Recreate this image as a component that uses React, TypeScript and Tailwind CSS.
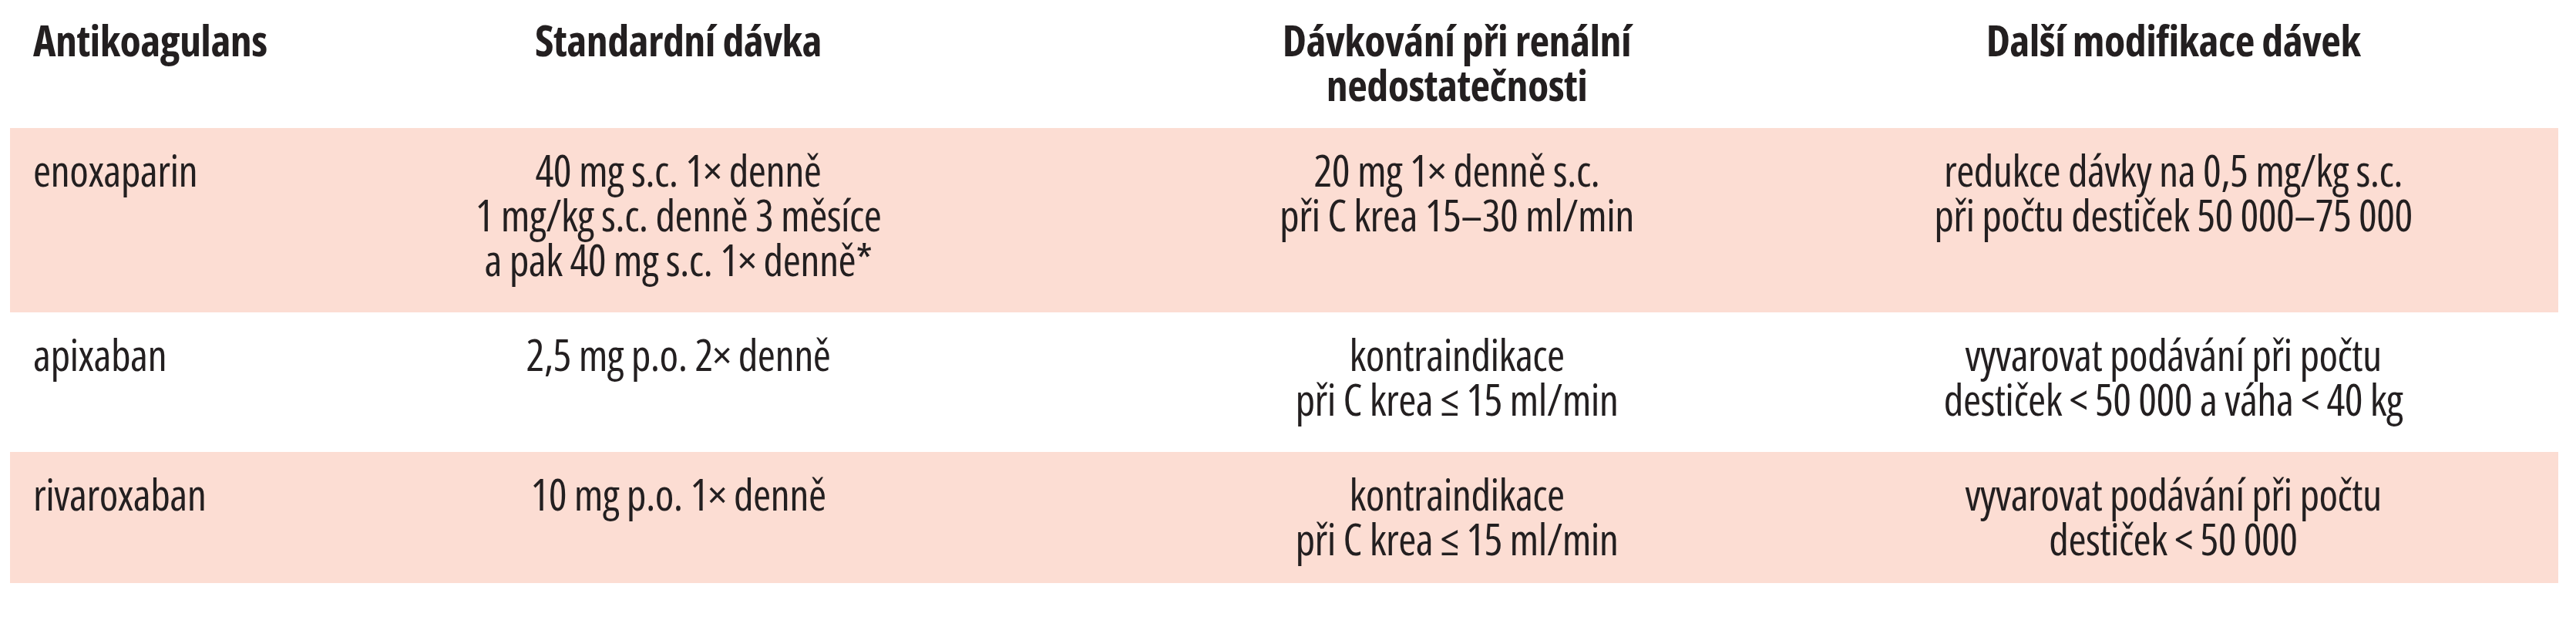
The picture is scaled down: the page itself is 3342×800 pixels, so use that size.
type Row = {
  name: string
  std: string[]
  renal: string[]
  other: string[]
  pink: boolean
  pad: string
}

const rows: Row[] = [
  {
    name: "enoxaparin",
    std: ["40 mg s.c. 1× denně", "1 mg/kg s.c. denně 3 měsíce", "a pak 40 mg s.c. 1× denně*"],
    renal: ["20 mg 1× denně s.c.", "při C krea 15–30 ml/min"],
    other: ["redukce dávky na 0,5 mg/kg s.c.", "při počtu destiček 50 000–75 000"],
    pink: true,
    pad: "pt-[25px] pb-[40px]",
  },
  {
    name: "apixaban",
    std: ["2,5 mg p.o. 2× denně"],
    renal: ["kontraindikace", "při C krea ≤ 15 ml/min"],
    other: ["vyvarovat podávání při počtu", "destiček < 50 000 a váha < 40 kg"],
    pink: false,
    pad: "pt-[25px] pb-[40px]",
  },
  {
    name: "rivaroxaban",
    std: ["10 mg p.o. 1× denně"],
    renal: ["kontraindikace", "při C krea ≤ 15 ml/min"],
    other: ["vyvarovat podávání při počtu", "destiček < 50 000"],
    pink: true,
    pad: "pt-[25px] pb-[29px]",
  },
]

// jedna buňka = jeden textový blok, řádky oddělené <br />
function Cell({ items, className }: { items: string[]; className?: string }) {
  return (
    <div className={`whitespace-nowrap text-center ${className ?? ""}`}>
      {items.map((t, i) => (
        <span key={t}>
          {i > 0 && <br />}
          {t}
        </span>
      ))}
    </div>
  )
}

export default function App() {
  return (
    <div
      className="w-[3342px] h-[800px] bg-white pl-[13px] pr-[23px] text-[#231f20] text-[56px] leading-[58px] font-stretch-condensed tracking-[-0.01em]"
      style={{ fontFamily: '"Open Sans", "Liberation Sans", sans-serif' }}
    >
      {/* hlavička */}
      <div className="grid grid-cols-[427px_880px_1140px_859px] font-bold pt-[22px] pb-[28px]">
        <div className="pl-[30px]">Antikoagulans</div>
        <Cell items={["Standardní dávka"]} />
        <Cell items={["Dávkování při renální", "nedostatečnosti"]} />
        <Cell items={["Další modifikace dávek"]} className="pr-[140px]" />
      </div>

      {rows.map((r) => (
        <div
          key={r.name}
          className={`grid grid-cols-[427px_880px_1140px_859px] ${r.pad} ${r.pink ? "bg-[#fcddd3]" : "bg-white"}`}
        >
          <div className="pl-[30px]">{r.name}</div>
          <Cell items={r.std} />
          <Cell items={r.renal} />
          <Cell items={r.other} className="pr-[140px]" />
        </div>
      ))}
    </div>
  )
}
